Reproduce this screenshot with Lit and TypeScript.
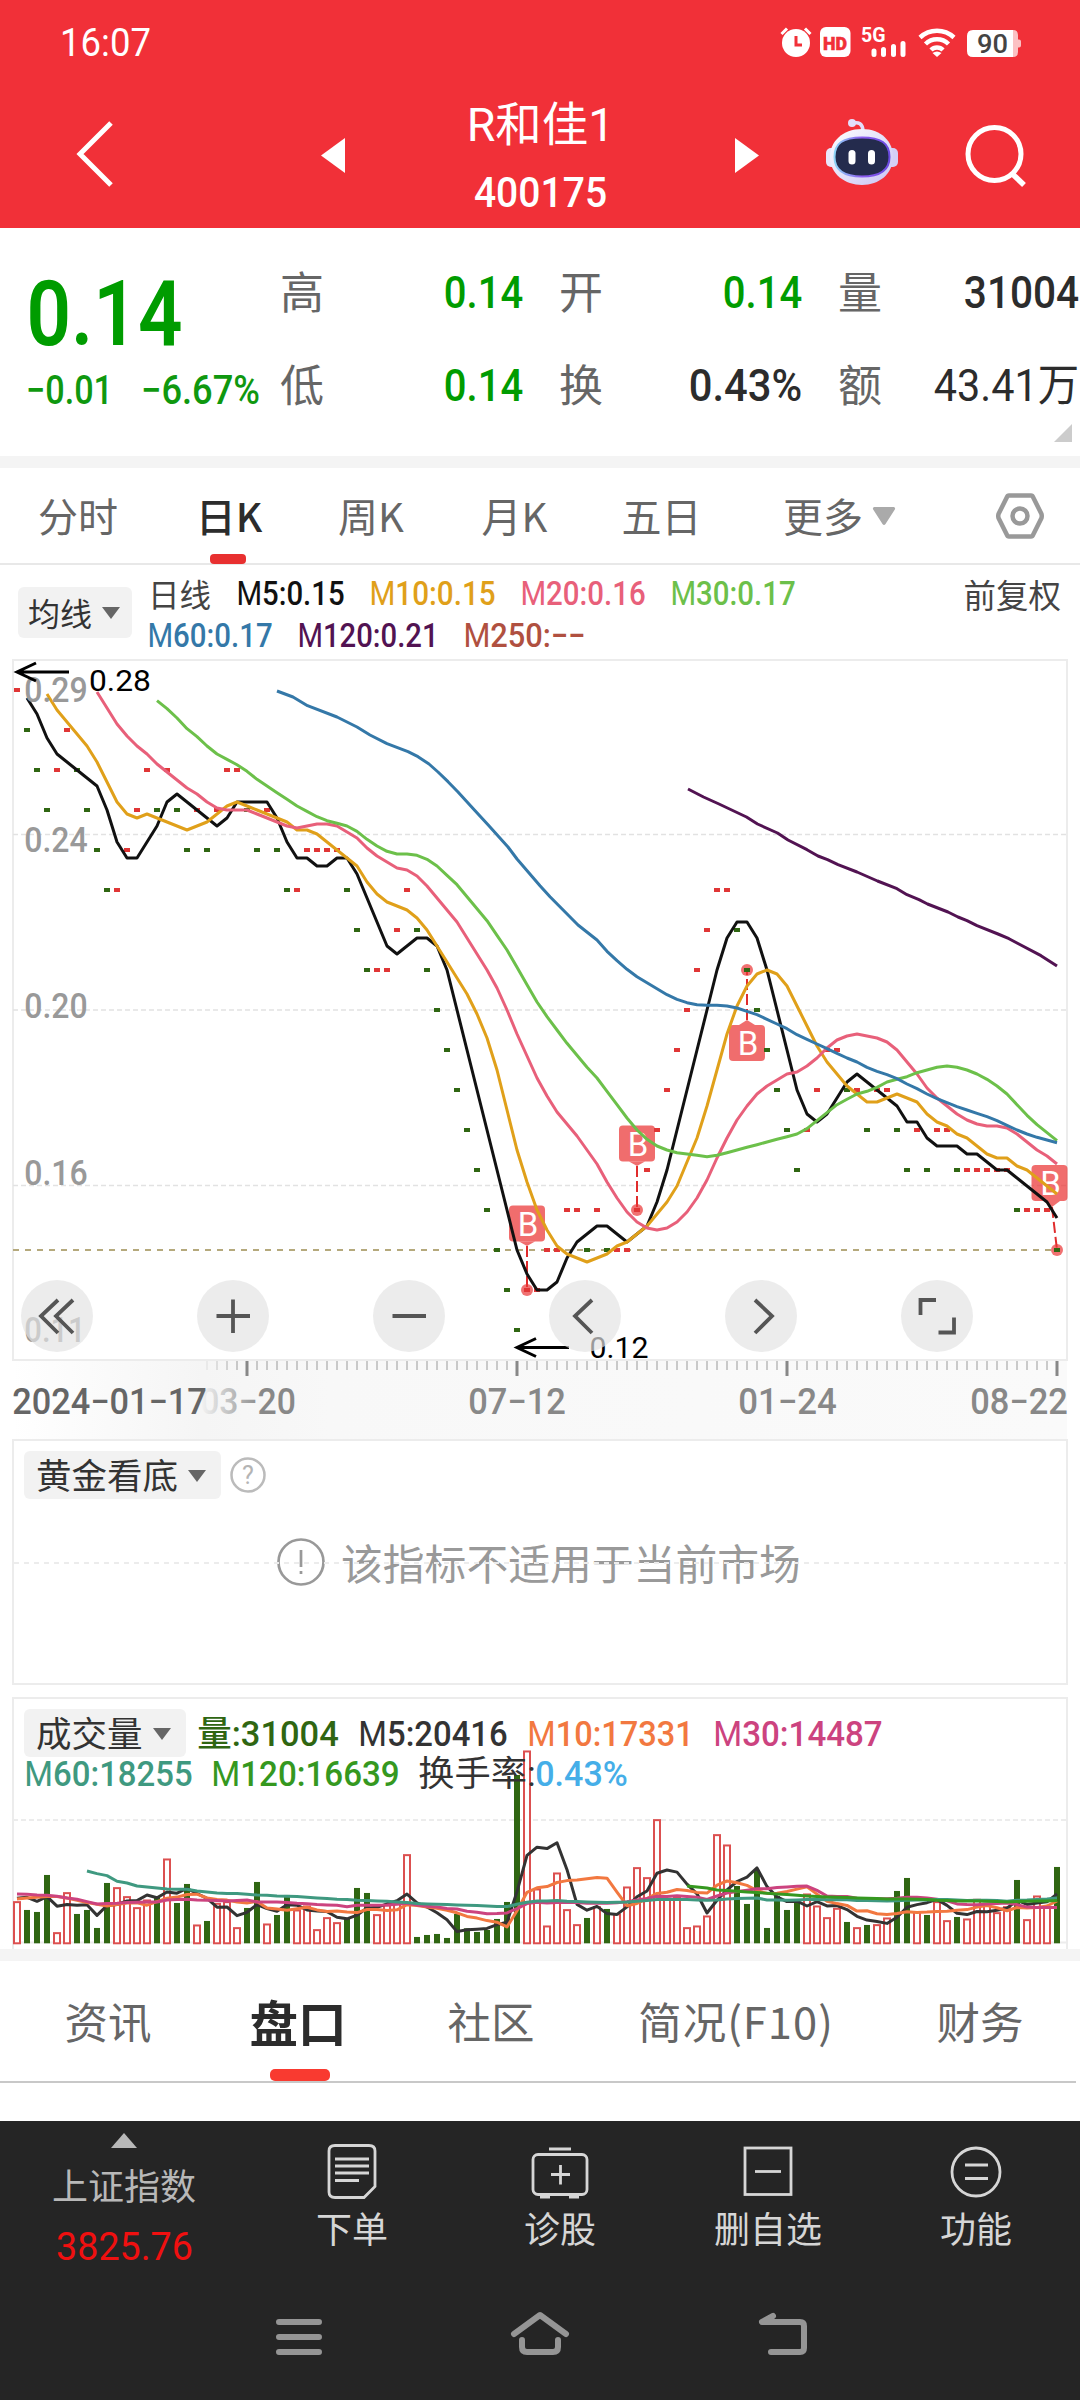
import { LitElement, html, svg, css } from "lit";
import { customElement, property } from "lit/decorators.js";

const CAP = 0.711;

/** Text whose box is its cap height, fitted to a given width. */
@customElement("fit-text")
class FitText extends LitElement {
  @property() text = "";
  @property() lead = "";
  @property({ type: Number }) w = 100;
  @property({ type: Number }) size = 36;
  @property({ type: Number }) weight = 500;
  @property() color = "#333";
  static styles = css`
    :host { display: block; flex: none; }
    svg { display: block; overflow: visible; }
    text { font-family: Roboto, "Noto Sans CJK SC", sans-serif; }
  `;
  render() {
    const h = this.size * CAP;
    return html`<svg width=${this.w} height=${h} viewBox="0 0 ${this.w} ${h}">
      <text x=${-0.05 * this.size} y=${h} font-size=${this.size} font-weight=${this.weight} fill=${this.color}
        textLength=${this.w + 0.1 * this.size} lengthAdjust="spacingAndGlyphs"><tspan font-weight="400">${this.lead}</tspan>${this.text}</text>
    </svg>`;
  }
}

const fit = (text: string, w: number, size: number, color: string, weight = 500, lead = "") =>
  html`<fit-text .text=${text} .lead=${lead} .w=${w} .size=${size} .color=${color} .weight=${weight}></fit-text>`;

/* ---------- data ---------- */

const N = 105;
const px = (i: number) => 17 + 10 * i;

const closes = [
  28, 27, 26, 25, 26, 27, 26, 25, 24, 23, 23, 24, 25, 26, 25, 26, 25, 24, 25, 24, 25, 26, 26, 25, 24, 25, 24, 23, 23, 24,
  24, 24, 24, 23, 22, 21, 21, 21, 22, 23, 22, 21, 20, 19, 18, 17, 16, 15, 14, 13, 12, 13, 13, 14, 14, 15, 15, 14, 15, 14,
  14, 14, 15, 16, 17, 18, 19, 20, 21, 22, 23, 23, 22, 21, 20, 19, 18, 17, 16, 17, 18, 19, 19, 18, 18, 17, 18, 18, 17, 16,
  17, 16, 17, 17, 16, 16, 16, 16, 16, 16, 15, 15, 15, 15, 14,
];
/* closes before the visible window, oldest first */
const earlier = [32, 32, 32, 31, 31, 31, 30, 30, 30, 30, 30, 29, 28, 28, 28];
const all = [...earlier, ...closes];
const OFF = earlier.length;
const down = closes.map((c, i) => i > 0 && c < closes[i - 1]);
const priceY = (p: number) => 1330 - (p - 12) * 40;

type P = [number, number];
const priceMA = (k: number, from: number): P[] => {
  const out: P[] = [];
  for (let i = from; i < N; i++) {
    let s = 0;
    for (let j = 0; j < k; j++) s += all[OFF + i - j];
    out.push([px(i), priceY(s / k)]);
  }
  return out;
};
const ma60: P[] = [
  [277, 691], [293, 697], [307.5, 705.7], [337, 717], [357, 727], [370, 735], [387, 743.7], [408, 751.7], [418, 756.7],
  [429, 764], [438, 772], [448, 781.7], [458, 792], [473.5, 809], [488, 824.7], [508, 847], [517, 859], [540, 885.7],
  [550, 896.7], [578, 925], [597, 940], ...priceMA(60, 59),
];
const ma120: P[] = [
  [688, 789], [703.5, 797], [719, 804], [746.5, 817], [757.5, 824], [777.5, 833], [788, 840], [807, 849.7], [818, 856],
  [827.5, 859.7], [838, 864.7], [857, 872], [877.5, 881], [897, 888.7], [907, 894.7], [919, 899.7], [927.5, 904],
  [948, 912], [958, 917], [967, 920.7], [977, 925.7], [998, 934], [1009, 938.7], [1017, 943], [1041, 955.7], [1057, 966],
];

/* bar heights in thirds of a pixel */
const volumes = [
  635, 660, 666, 555, 728, 608, 672, 660, 714, 579, 593, 620, 653, 630, 620, 507, 639, 582, 705, 693, 640, 635, 713, 654,
  576, 702, 675, 615, 660, 648, 719, 683, 698, 685, 594, 609, 674, 645, 640, 494, 741, 735, 732, 744, 672, 715, 726, 720,
  687, 636, 255, 183, 597, 708, 549, 659, 704, 684, 650, 657, 672, 591, 533, 563, 389, 625, 622, 713, 708, 678, 434, 465,
  588, 642, 540, 714, 618, 660, 636, 612, 648, 683, 655, 696, 713, 705, 704, 684, 603, 564, 665, 675, 635, 692, 681, 687,
  628, 640, 668, 650, 570, 689, 618, 650, 531,
].map((y) => 760 - y);
const volY = (v: number) => 1943.3 - v / 3;
const volMA = (k: number, lead: number[], start = 0): P[] => {
  const out: P[] = lead.map((y, j) => [px(start + j), volY(760 - y)]);
  for (let i = Math.max(k - 1, start + lead.length); i < N; i++) {
    let s = 0;
    for (let j = 0; j < k; j++) s += volumes[i - j];
    out.push([px(i), volY(s / k)]);
  }
  return out;
};
const v5 = volMA(5, [625, 622, 634, 620]);
const v10 = volMA(10, [627, 624, 622, 620, 620, 624, 631, 638, 643]);
const v30 = volMA(30, [
  612, 613, 615, 616, 619, 624, 628, 635, 642, 641, 640, 638, 637, 636, 636, 630, 629, 628, 630, 631, 632, 633, 632, 630,
  636, 636, 636, 638, 640,
]);
const v60 = volMA(60, [
  543, 551, 557, 574, 579, 588, 591, 594, 597, 598, 598, 603, 606, 609, 611, 611, 613, 615, 616, 618, 619, 620, 622, 624,
  626, 628, 629, 631, 632, 633, 634, 636, 638, 641, 642, 643, 644, 645, 646, 647, 648, 650, 650, 643, 637, 633, 633, 632,
  634, 635, 636, 637, 638, 637, 636, 634, 632, 629, 629, 629, 629, 630, 631, 630, 627, 626, 625, 624,
], 7);
const v120 = volMA(120, [
  588, 591, 594, 600, 602, 604, 606, 608, 610, 612, 614, 616, 618, 620, 621, 622, 623, 624, 625, 626, 627, 627, 627, 628,
  629, 631, 632, 633, 633, 633, 634, 635, 636, 635, 634, 633, 633, 632,
], 67);

const pts = (a: P[]) => a.map(([x, y]) => `${x},${y.toFixed(1)}`).join(" ");
const line = (a: P[], color: string) =>
  svg`<polyline points=${pts(a)} fill="none" stroke=${color} stroke-width="3" stroke-linejoin="round"/>`;
const dash = (y: number, color = "#e2e2e2", w = 1.5) =>
  svg`<line x1="13" x2="1066" y1=${y} y2=${y} stroke=${color} stroke-width=${w} stroke-dasharray="5 3"/>`;
const label = (t: string, x: number, y: number, w: number, size: number, color: string, weight = 400) =>
  svg`<text x=${x - 0.05 * size} y=${y} font-size=${size} fill=${color} font-weight=${weight}
    textLength=${w + 0.1 * size} lengthAdjust="spacingAndGlyphs">${t}</text>`;

const buy = (x: number, top: number, tipY: number, dotX: number, dotY: number, tipX = x) => {
  const edge = tipY > top ? top + 36 : top;
  return svg`
    <rect x=${x - 18} y=${top} width="36" height="36" rx="4" fill="#ea3434" fill-opacity=".72"/>
    <path d="M${tipX - 8} ${edge}L${tipX} ${tipY}L${tipX + 8} ${edge}Z" fill="#ea3434" fill-opacity=".72"/>
    <text x=${x + 1} y=${top + 30} text-anchor="middle" font-size="33" fill="#fff">B</text>
    <line x1=${tipX} y1=${tipY} x2=${dotX} y2=${dotY} stroke="#e02c2c" stroke-width="2" stroke-dasharray="11 4"/>
    <circle cx=${dotX} cy=${dotY} r="6" fill="#ea3434" fill-opacity=".7"/>`;
};

const arrow = (x: number, y: number) =>
  svg`<path d="M${x + 52} ${y}H${x}M${x + 19} ${y - 9}L${x} ${y}L${x + 19} ${y + 9}" fill="none" stroke="#000" stroke-width="3"/>`;

const GREEN = "#2f6612";
const RED = "#e03636";

const caret = (color = "#666") => html`<svg width="18" height="12" viewBox="0 0 18 12"><path d="M0 0H18L9 12Z" fill=${color}/></svg>`;

@customElement("app-root")
class AppRoot extends LitElement {
  static styles = css`
    :host {
      display: block; width: 1080px; height: 2400px; background: #fff; overflow: hidden; position: relative;
      font-family: "Noto Sans CJK SC", sans-serif; color: #666; line-height: 1;
    }
    * { box-sizing: border-box; }
    svg { display: block; flex: none; overflow: visible; }
    svg text { font-family: Roboto, sans-serif; }
    .row { display: flex; align-items: center; }
    header { height: 228px; background: #f13038; }
    .status { height: 87px; padding: 27px 58.5px 0 62px; justify-content: space-between; align-items: flex-start; }
    .clock { padding-top: 2px; }
    .nav { height: 141px; display: grid; grid-template-columns: 321px 438px 66px 1fr; align-items: start; }
    .back { padding: 34px 0 0 75px; }
    .switch { display: flex; justify-content: space-between; padding-top: 15px; }
    .switch > svg { margin-top: 36px; }
    .names { display: flex; flex-direction: column; align-items: center; }
    .code { margin-top: 36px; }
    .title { margin-top: 6px; }
    .robot { padding-top: 31px; grid-column: 4; display: flex; }
    .search { margin: 9px 0 0 66px; }

    .quote { height: 228px; padding: 0 0 0 28px; display: grid; grid-template-columns: 252px 241px 241px 242px; column-gap: 0; position: relative; }
    .price { padding-top: 53px; }
    .big { padding-left: 3px; }
    .delta { display: flex; gap: 32px; margin-top: 31px; }
    .fact-col { padding-top: 40px; }
    .fact-col + .fact-col { margin-left: 38px; width: 241px; }
    .fact-col + .fact-col + .fact-col { margin-left: 76px; width: 239px; }
    .fact { display: flex; justify-content: space-between; height: 44px; font-size: 44px; margin-bottom: 49px; align-items: center; }
    .fact fit-text { margin-top: 5px; }
    .corner { position: absolute; right: 8px; top: 196px; }
    .band { height: 12px; background: #f4f4f4; }

    .tabs { height: 97px; border-bottom: 2px solid #e8e8e8; display: grid;
      grid-template-columns: 156px 146px 138px 149px 145px 210px 136px; font-size: 40px; }
    .tab { position: relative; padding-top: 27px; display: flex; justify-content: center; align-items: flex-start; }
    .tab.on { color: #2c2c2c; font-weight: 500; }
    .tab.on::after { content: ""; position: absolute; left: 50%; top: 86px; width: 36px; height: 10px; margin-left: -19px; border-radius: 4px; background: #e83030; }
    .tab.more { gap: 10px; }
    .tab.more svg { margin-top: 12px; }
    .tab.hex { padding: 24px 0 0 16px; }

    .legend { height: 94px; display: flex; padding: 0 19px 0 18px; }
    .pill { display: flex; align-items: center; background: #f2f2f2; border-radius: 6px; color: #333; padding-bottom: 2px; }
    .pill svg { margin-top: 3px; }
    .legend .pill { width: 114px; height: 51px; margin-top: 22px; font-size: 32px; padding-left: 10px; gap: 10px; }
    .legend .mas { margin-left: 17px; flex: 1; }
    .mas .row { gap: 28px; height: 23px; align-items: flex-end; }
    .mas .row:first-child { margin: 17px 0 19px -1px; }
    .mas .day { font-size: 31.5px; line-height: 23px; color: #444; margin-right: -1px; }
    .adjust { font-size: 32.5px; color: #444; margin-top: 13px; }

    .chart { position: relative; height: 702px; }
    .controls { position: absolute; left: 21px; top: 621px; display: flex; gap: 104px; }
    .ctl { width: 72px; height: 72px; border-radius: 50%; background: rgba(227, 227, 227, .68); }
    .axis { height: 79px; }

    .panel { position: relative; margin: 0 12px; border: 2px solid #ececec; }
    .panel .pill { height: 48px; font-size: 35.5px; padding-left: 12px; gap: 10px; width: max-content; padding-right: 15px; }
    .gold { height: 246px; padding: 10px 10px 0; margin-top: -1px; }
    .gold .top { gap: 9px; }
    .midline { position: absolute; left: 0; top: 121px; width: 100%; }
    .notice { display: flex; align-items: center; gap: 16px; margin: 39px 0 0 253px; font-size: 41.8px; color: #999; }
    .notice span { white-space: nowrap; padding-top: 1px; }
    .vol { height: 252px; margin-top: 12px; border-bottom: 0; padding: 10px 10px 0; }
    .vol .plot { position: absolute; left: -14px; top: -2px; }
    .vol .row { position: relative; }
    .vol .first { gap: 23px; }
    .vol .first .pill { margin-right: -10px; }
    .vol .second { gap: 22px; padding: 4px 0 0 2px; }
    .turn { display: flex; gap: 3px; }

    .tabs2 { height: 122px; width: 1076px; border-bottom: 2px solid #c8c8c8; display: grid; font-size: 43.5px;
      grid-template-columns: 216px 164px 222px 268px 206px; }
    .tabs2 .tab { padding-top: 38px; white-space: nowrap; }
    .tabs2 .tab.wide { letter-spacing: 1px; }
    .tabs2 .tab:last-child { padding-left: 14px; }
    .tabs2 .tab.on { font-size: 48.5px; font-weight: 700; padding-top: 36px; }
    .tabs2 .tab.on::after { width: 60px; height: 12px; top: 108px; margin-left: -28px; background: #f93a30; border-radius: 5px; }
    footer { margin-top: 38px; height: 279px; background: #252525; }
    .tools { display: grid; grid-template-columns: 248px repeat(4, 208px); height: 156px; }
    .tool { display: flex; flex-direction: column; align-items: center; font-size: 36px; color: #d6d6d6; padding-top: 21px; }
    .tool span { margin-top: 9px; }
    .tool.index { color: #b8b8b8; padding-top: 12px; }
    .tool.index span { margin: 18px 0 30px; }
    .sys { display: flex; justify-content: space-around; padding: 34px 178px 0 181px; }
  `;

  private header() {
    return html`<header>
      <div class="status row">
        <div class="clock">${fit("16:07", 87, 38, "#fff", 400)}</div>
        <svg width="241" height="32" viewBox="780 27 241 32">
          <g fill="#fff">
            <circle cx="795" cy="43" r="14"/>
            <path d="M780.5 34L786 28.5M809.5 34L804 28.5" stroke="#fff" stroke-width="3"/>
            <path d="M795 36V45H801" fill="none" stroke="#f13038" stroke-width="3"/>
            <rect x="819" y="27" width="30.500" height="30" rx="6"/>
          </g>
          <text x="822" y="49.500" font-size="19" font-weight="900" fill="#f13038" stroke="#f13038" stroke-width=".5" textLength="24" lengthAdjust="spacingAndGlyphs">HD</text>
          <text x="860" y="42" font-size="20.500" font-weight="700" fill="#fff" textLength="24.500" lengthAdjust="spacingAndGlyphs">5G</text>
          <path d="M873 51V54.500M882.500 49.500V54.500M892.500 46.500V54.500M902 43.500V54.500" stroke="#fff" stroke-width="5" stroke-linecap="round"/>
          <g fill="none" stroke="#fff" stroke-width="4.500">
            <path d="M919 37.500A25 25 0 0 1 953 37.500"/>
            <path d="M924.500 44A16.500 16.500 0 0 1 947.500 44"/>
            <path d="M930 50A8.500 8.500 0 0 1 942 50"/>
          </g>
          <path d="M936 57L931.500 53Q936 50 940.500 53Z" fill="#fff"/>
          <path d="M1005 30h7q5 0 5 5v4.500h1q2 0 2 2v4q0 2-2 2h-1V52q0 5-5 5h-7Z" fill="#fff" fill-opacity=".7"/>
          <path d="M972 30H1012V57H972Q966 57 966 51V36Q966 30 972 30Z" fill="#fff"/>
          <text x="976" y="53" font-size="25.500" font-weight="500" fill="#444" textLength="31" lengthAdjust="spacingAndGlyphs">90</text>
        </svg>
      </div>
      <div class="nav">
        <div class="back"><svg width="40" height="66" viewBox="75 120 40 66"><path d="M111 122L80 153L111 184" fill="none" stroke="#fff" stroke-width="5"/></svg></div>
        <div class="switch">
          <svg width="24" height="35"><path d="M24 0V35L0 17.500Z" fill="#fff"/></svg>
          <div class="names">
            <div class="title">${fit("R和佳1", 143, 47, "#fff", 400)}</div>
            <div class="code">${fit("400175", 129, 42, "#fff", 500)}</div>
          </div>
          <svg width="24" height="35"><path d="M0 0V35L24 17.500Z" fill="#fff"/></svg>
        </div>
        <div class="robot">
          <svg width="74" height="68" viewBox="824 119 74 68">
            <defs>
              <linearGradient id="hd" x1="0" y1="0" x2="1" y2="1"><stop offset="0" stop-color="#fff"/><stop offset="1" stop-color="#c9c4f4"/></linearGradient>
              <linearGradient id="rim" x1="0" y1="0" x2="1" y2="0"><stop offset="0" stop-color="#8fd4f6"/><stop offset=".5" stop-color="#8d5cf0"/><stop offset="1" stop-color="#6a4ae0"/></linearGradient>
            </defs>
            <rect x="825" y="149" width="12" height="19" rx="5" fill="#e9e6fb"/>
            <rect x="885" y="149" width="12" height="19" rx="5" fill="#d4cff6"/>
            <path d="M852 124Q861 122 862 131" fill="none" stroke="#e3defb" stroke-width="3.500"/>
            <circle cx="851" cy="124" r="4" fill="#e3defb"/>
            <path d="M861 130C881 130 892 143 892 158C892 175 878 186 861 186C844 186 829 175 829 158C829 143 841 130 861 130Z" fill="url(#hd)"/>
            <path d="M861 138.500C880 138.500 888.500 144 888.500 158C888.500 171 880 177.500 861 177.500C842 177.500 833.500 171 833.500 158C833.500 144 842 138.500 861 138.500Z" fill="#242b4d" stroke="url(#rim)" stroke-width="2"/>
            <rect x="847.500" y="151" width="7" height="14.500" rx="3.500" fill="#fff"/>
            <rect x="867" y="151" width="7" height="14.500" rx="3.500" fill="#fff"/>
          </svg>
          <svg class="search" width="62" height="62" viewBox="965 124 62 62" fill="none" stroke="#fff" stroke-width="5">
            <circle cx="994.500" cy="151" r="26.500"/><path d="M1012.500 171L1024 182" stroke-width="5.500"/>
          </svg>
        </div>
      </div>
    </header>`;
  }

  private quote() {
    const g = "#009c00", k = "#2c2c2c";
    const fact = (name: string, v: unknown) => html`<div class="fact"><span>${name}</span>${v}</div>`;
    return html`<section class="quote">
      <div class="price">
        <div class="big">${fit("0.14", 147, 90, g, 600)}</div>
        <div class="delta">${fit("−0.01", 83, 40, "#0f980f", 500)}${fit("−6.67%", 115, 40, "#0f980f", 500)}</div>
      </div>
      <div class="fact-col">${fact("高", fit("0.14", 75, 44, g))}${fact("低", fit("0.14", 75, 44, g))}</div>
      <div class="fact-col">${fact("开", fit("0.14", 75, 44, g))}${fact("换", fit("0.43%", 109, 44, k))}</div>
      <div class="fact-col">${fact("量", fit("31004", 111, 44, k))}${fact("额", fit("43.41万", 141, 44, k, 400))}</div>
      <svg class="corner" width="18" height="18"><path d="M18 0V18H0Z" fill="#ccc"/></svg>
    </section>`;
  }

  private tabs() {
    return html`<div class="tabs">
      <div class="tab">分时</div><div class="tab on">日K</div><div class="tab">周K</div><div class="tab">月K</div><div class="tab">五日</div>
      <div class="tab more">更多<svg width="22" height="18"><path d="M1 0H21Q23 1 21.500 3L12.500 17Q11 19 9.500 17L.5 3Q-1 1 1 0Z" fill="#aaa"/></svg></div>
      <div class="tab hex"><svg width="50" height="48" viewBox="995 492 50 48" fill="none" stroke="#999" stroke-width="4.500" stroke-linejoin="round">
        <path d="M1009 495.500H1031Q1032.500 495.500 1033 497L1041.500 514Q1042 516 1041.500 518L1033 535Q1032.500 536.500 1031 536.500H1009Q1007.500 536.500 1007 535L998.500 518Q998 516 998.500 514L1007 497Q1007.500 495.500 1009 495.500Z"/><circle cx="1020" cy="516" r="7.500"/></svg></div>
    </div>`;
  }

  private legend() {
    return html`<div class="legend">
      <div class="pill">均线${caret()}</div>
      <div class="mas">
        <div class="row"><span class="day">日线</span>
          ${fit("5:0.15", 105, 33, "#111", 500, "M")}${fit("10:0.15", 123, 33, "#e0a01a", 500, "M")}
          ${fit("20:0.16", 122, 33, "#e8607a", 500, "M")}${fit("30:0.17", 122, 33, "#6cc04a", 500, "M")}</div>
        <div class="row">${fit("60:0.17", 122, 33, "#3478a8", 500, "M")}${fit("120:0.21", 138, 33, "#521352", 500, "M")}${fit("250:−−", 119, 33, "#b05040", 500, "M")}</div>
      </div>
      <div class="adjust">前复权</div>
    </div>`;
  }

  private chart() {
    const ctl = (d: string) => html`<div class="ctl"><svg width="72" height="72" fill="none" stroke="#555" stroke-width="3.800"><path d=${d}/></svg></div>`;
    return html`<div class="chart">
      <svg width="1080" height="702" viewBox="0 659 1080 702">
        <rect x="13" y="660" width="1054" height="700" fill="none" stroke="#ececec" stroke-width="2"/>
        ${dash(834.5)}${dash(1010)}${dash(1185.5)}
        <line x1="13" x2="1057" y1="1250" y2="1250" stroke="#b5a97c" stroke-width="2" stroke-dasharray="6 6"/>
        ${buy(527, 1205.5, 1246, 527, 1290)}${buy(637, 1125.5, 1166, 637, 1210)}
        ${buy(747, 1025, 1020, 747, 970)}${buy(1049.5, 1165, 1207, 1057, 1250, 1052)}
        ${closes.map((c, i) => svg`<rect x=${px(i) - 3} y=${priceY(c) - 2} width="6" height="4" fill=${down[i] ? GREEN : RED}/>`)}
        ${line(priceMA(5, 1), "#111")}${line(priceMA(10, 3), "#e0a01a")}${line(priceMA(20, 8), "#e8607a")}
        ${line(priceMA(30, 14), "#6cc04a")}${line(ma60, "#3478a8")}${line(ma120, "#521352")}
        ${label("0.29", 26, 701.5, 60, 34.5, "#999", 500)}${label("0.24", 26, 851.5, 60, 34.5, "#999", 500)}
        ${label("0.20", 26, 1018, 60, 34.5, "#999", 500)}${label("0.16", 26, 1185, 60, 34.5, "#999", 500)}
        ${label("0.11", 26, 1342, 58, 34.5, "#999", 500)}
        ${arrow(17, 672)}${label("0.28", 90.5, 690.5, 59, 30, "#000")}
        ${arrow(517, 1347.5)}${label("0.12", 591, 1358, 56, 30, "#000")}
      </svg>
      <div class="controls">
        ${ctl("M37 20L20 36L37 53M52 20L35 36L52 53")}${ctl("M19.500 36H53M36 19.500V53")}${ctl("M19.500 36H53")}
        ${ctl("M43 20L26 36L43 53")}${ctl("M30 20L47 36L30 53")}${ctl("M19.500 35V20H35M37.500 52.500H53V37.500")}
      </div>
    </div>
    <svg class="axis" width="1080" height="79" viewBox="0 1361 1080 79">
      <defs>
        <linearGradient id="ax" x1="13" x2="1067" y1="0" y2="0" gradientUnits="userSpaceOnUse">
          <stop offset="0" stop-color="#fff"/><stop offset=".18" stop-color="#f5f5f5"/><stop offset=".3" stop-color="#f8f8f8"/><stop offset="1" stop-color="#fafafa"/></linearGradient>
        <linearGradient id="fade" x1="200" x2="262" y1="0" y2="0" gradientUnits="userSpaceOnUse">
          <stop offset="0" stop-color="#888" stop-opacity="0"/><stop offset="1" stop-color="#888"/></linearGradient>
      </defs>
      <rect x="13" y="1361" width="1054" height="79" fill="url(#ax)"/>
      ${closes.map((_, i) => {
        if (i < 19) return null;
        const major = (i - 23) % 27 === 0;
        return svg`<rect x=${px(i) - (major ? 1.5 : 0.5)} y="1361" width=${major ? 3 : 1} height=${major ? 15 : 9} fill=${major ? "#888" : "#999"} opacity=${Math.min(1, (i - 18) / 4)}/>`;
      })}
      ${label("2024−01−17", 14, 1414, 191, 36, "#666", 500)}
      ${label("03−20", 202, 1414, 92, 36, "url(#fade)", 500)}
      ${label("07−12", 470, 1414, 94, 36, "#888", 500)}${label("01−24", 740, 1414, 95, 36, "#888", 500)}${label("08−22", 972, 1414, 94, 36, "#888", 500)}
    </svg>`;
  }

  private gold() {
    return html`<section class="panel gold">
      <svg class="midline" height="2"><line x1="0" x2="1054" y1="1" y2="1" stroke="#ececec" stroke-width="2" stroke-dasharray="5 5"/></svg>
      <div class="top row"><div class="pill">黄金看底${caret()}</div>
        <svg width="36" height="36"><circle cx="18" cy="18" r="16.500" fill="none" stroke="#bbb" stroke-width="2.500"/>
          <text x="18" y="26.500" text-anchor="middle" font-size="25" fill="#b4b4b4">?</text></svg></div>
      <div class="notice"><svg width="48" height="48" fill="none" stroke="#999" stroke-width="2.700"><circle cx="24" cy="24" r="22.500"/><path d="M24 12V29M24 33V36"/></svg><span>该指标不适用于当前市场</span></div>
    </section>`;
  }

  private volume() {
    return html`<section class="panel vol">
      <svg class="plot" width="1080" height="252" viewBox="0 1697 1080 252">
        ${dash(1820, "#ececec", 2)}
        <line x1="13" x2="1067" y1="1942.500" y2="1942.500" stroke="#ececec" stroke-width="2"/>
        ${volumes.map((v, i) => down[i]
          ? svg`<rect x=${px(i) - 3} y=${volY(v)} width="6" height=${v / 3} fill=${GREEN}/>`
          : svg`<rect x=${px(i) - 3} y=${volY(v) + 0.5} width="6" height=${v / 3 - 0.5} fill="#fff" stroke="#dc5050" stroke-width="2"/>`)}
        ${line(v5, "#333")}${line(v10, "#f27840")}${line(v30, "#cc437f")}${line(v60, "#3f9980")}${line(v120, "#35981f")}
      </svg>
      <div class="row first"><div class="pill">成交量${caret()}</div>
        ${fit("量:31004", 138, 35, GREEN)}${fit("5:20416", 146, 35, "#333", 500, "M")}
        ${fit("10:17331", 163, 35, "#f27840", 500, "M")}${fit("30:14487", 166, 35, "#cc437f", 500, "M")}</div>
      <div class="row second">${fit("60:18255", 165, 35, "#3f9980", 500, "M")}${fit("120:16639", 185, 35, "#35981f", 500, "M")}
        <div class="turn">${fit("换手率:", 114, 35, "#333", 400)}${fit("0.43%", 89, 35, "#45aee8")}</div></div>
    </section>`;
  }

  private footer() {
    return html`<footer>
      <div class="tools">
        <div class="tool index"><svg width="26" height="15"><path d="M13 0L26 15H0Z" fill="#b8b8b8"/></svg><span>上证指数</span>${fit("3825.76", 133, 39, "#f01010", 400)}</div>
        <div class="tool"><svg width="50" height="58" fill="none" stroke="#d6d6d6" stroke-width="2.800">
          <path d="M8 3.500H42Q48 3.500 48 9V44.500L37 55.500H8Q2 55.500 2 50V9Q2 3.500 8 3.500Z"/><path d="M8 17H42M8 24H42M8 31H42M8 38.500H32"/></svg><span>下单</span></div>
        <div class="tool"><svg width="58" height="58" fill="none" stroke="#d6d6d6" stroke-width="2.800">
          <rect x="2" y="12.500" width="54" height="40" rx="5"/><path d="M18 7H40M20 32.500H39M29.500 23V42.500"/><path d="M9 54.500H19M38 54.500H48" stroke-width="4"/></svg><span>诊股</span></div>
        <div class="tool"><svg width="50" height="58" fill="none" stroke="#d6d6d6" stroke-width="2.800"><rect x="2" y="6" width="46" height="46.500"/><path d="M12 29.500H38"/></svg><span>删自选</span></div>
        <div class="tool"><svg width="52" height="58" fill="none" stroke="#d6d6d6" stroke-width="2.800"><circle cx="26" cy="30" r="24"/><path d="M15 23H38M15 36.500H38"/></svg><span>功能</span></div>
      </div>
      <div class="sys">
        <svg width="48" height="46" viewBox="276 2311 48 46" stroke="#959595" stroke-width="6" stroke-linecap="round"><path d="M280 2322H320M280 2337H320M280 2352H320"/></svg>
        <svg width="60" height="46" viewBox="510 2311 60 46" fill="none" stroke="#959595" stroke-width="6" stroke-linecap="round" stroke-linejoin="round"><path d="M514 2334L540 2315L566 2334M522 2340V2347Q522 2352 527 2352H553Q558 2352 558 2347V2340"/></svg>
        <svg width="50" height="46" viewBox="755 2311 50 46" fill="none" stroke="#959595" stroke-width="6" stroke-linecap="round" stroke-linejoin="round"><path d="M770 2316L759 2322H797Q801 2322 801 2326V2348Q801 2352 797 2352H768"/></svg>
      </div>
    </footer>`;
  }

  render() {
    return html`${this.header()}${this.quote()}
      <div class="band"></div>
      ${this.tabs()}${this.legend()}${this.chart()}${this.gold()}${this.volume()}
      <div class="band"></div>
      <div class="tabs2"><div class="tab">资讯</div><div class="tab on">盘口</div><div class="tab">社区</div><div class="tab wide">简况(F10)</div><div class="tab">财务</div></div>
      ${this.footer()}`;
  }
}
